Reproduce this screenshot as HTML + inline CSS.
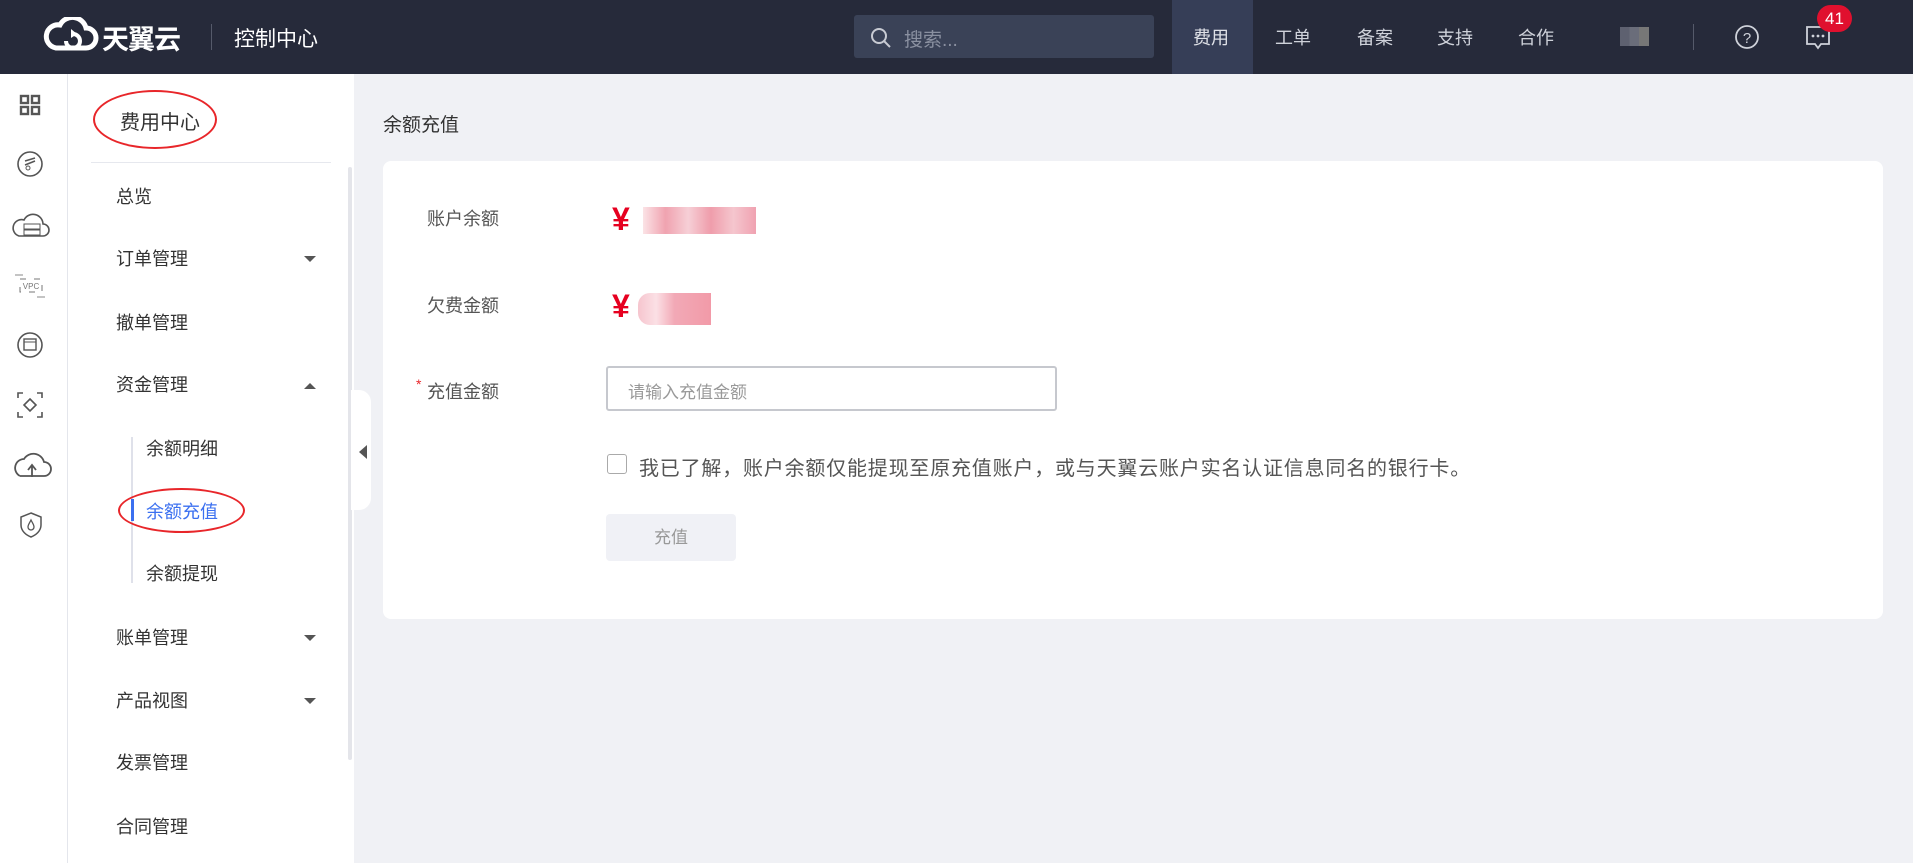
<!DOCTYPE html>
<html><head><meta charset="utf-8"><style>
*{margin:0;padding:0;box-sizing:border-box}
body{width:1913px;height:863px;overflow:hidden;background:#f0f1f5;font-family:"Liberation Sans","Noto Sans CJK SC",sans-serif;color:#333;position:relative}
.a{position:absolute}
.hdr{left:0;top:0;width:1913px;height:74px;background:#262a3a}
.nav{color:#cfd2da;font-size:18px;top:24px}
.side{left:0;top:74px;width:68px;height:789px;background:#fff;border-right:1px solid #e4e6ec}
.menu{left:68px;top:74px;width:286px;height:789px;background:#fff}
.mi{font-size:18px;color:#333;left:116px}
.sub{font-size:18px;color:#333;left:146px}
.arr{left:304px;width:0;height:0;border-left:6px solid transparent;border-right:6px solid transparent}
.lab{font-size:17px;color:#555;left:427px}
</style></head><body>
<div class="a hdr"></div>
<svg class="a" style="left:42px;top:17px" width="58" height="34" viewBox="0 0 58 34"><path d="M14 31 H44 A10 10 0 0 0 44 11 A14 14 0 0 0 18 8 A11 11 0 0 0 14 31 Z" fill="none" stroke="#fff" stroke-width="5"/><path d="M24 24 A7 7 0 1 0 31 17" fill="none" stroke="#fff" stroke-width="4"/><path d="M29 12 L35 17 L29 21 Z" fill="#fff"/></svg>
<div class="a" style="left:102px;top:18px;color:#fff;font-size:27px;font-weight:bold;letter-spacing:-1px">天翼云</div>
<div class="a" style="left:211px;top:24px;width:1px;height:26px;background:#555a6a"></div>
<div class="a" style="left:234px;top:23px;color:#fff;font-size:21px">控制中心</div>
<div class="a" style="left:854px;top:15px;width:300px;height:43px;background:#3a4257;border-radius:3px"></div>
<svg class="a" style="left:870px;top:27px" width="22" height="22" viewBox="0 0 22 22"><circle cx="9" cy="9" r="7" fill="none" stroke="#c8cbd3" stroke-width="2"/><path d="M14 14 L20 20" stroke="#c8cbd3" stroke-width="2"/></svg>
<div class="a" style="left:904px;top:25px;color:#8a90a0;font-size:19px">搜索...</div>
<div class="a" style="left:1172px;top:0;width:81px;height:74px;background:#363e57"></div>
<div class="a nav" style="left:1193px;color:#e0e2e8">费用</div>
<div class="a nav" style="left:1275px">工单</div>
<div class="a nav" style="left:1357px">备案</div>
<div class="a nav" style="left:1437px">支持</div>
<div class="a nav" style="left:1518px">合作</div>
<div class="a" style="left:1620px;top:27px;width:29px;height:19px;background:linear-gradient(90deg,#5e6170 33%,#6a6d7a 33% 66%,#777 66%)"></div>
<div class="a" style="left:1693px;top:24px;width:1px;height:26px;background:#555a6a"></div>
<svg class="a" style="left:1734px;top:24px" width="26" height="26" viewBox="0 0 26 26"><circle cx="13" cy="13" r="11" fill="none" stroke="#cfd2da" stroke-width="1.8"/><text x="13" y="19" text-anchor="middle" fill="#cfd2da" font-size="15" font-family="Liberation Sans">?</text></svg>
<svg class="a" style="left:1805px;top:25px" width="26" height="26" viewBox="0 0 26 26"><path d="M2 2 H24 V19 H16 L13 23 L10 19 H2 Z" fill="none" stroke="#cfd2da" stroke-width="1.8"/><circle cx="8" cy="11" r="1.4" fill="#cfd2da"/><circle cx="13" cy="11" r="1.4" fill="#cfd2da"/><circle cx="18" cy="11" r="1.4" fill="#cfd2da"/></svg>
<div class="a" style="left:1817px;top:5px;width:35px;height:27px;border-radius:14px;background:#e0102e;color:#fff;font-size:17px;text-align:center;line-height:27px">41</div>

<div class="a side"></div>
<svg class="a" style="left:19px;top:94px" width="22" height="22"><g fill="none" stroke="#555" stroke-width="2.4"><rect x="2" y="2" width="7" height="7"/><rect x="13" y="2" width="7" height="7"/><rect x="2" y="13" width="7" height="7"/><rect x="13" y="13" width="7" height="7"/></g></svg>
<svg class="a" style="left:16px;top:150px" width="28" height="28"><circle cx="14" cy="14" r="12" fill="none" stroke="#555" stroke-width="1.6"/><path d="M9 11 L19 8 M9 15 L19 11" stroke="#555" stroke-width="1.5"/><circle cx="12" cy="18" r="2" fill="none" stroke="#555"/></svg>
<svg class="a" style="left:11px;top:210px" width="40" height="30"><path d="M8 26 H32 A6 6 0 0 0 32 14 A10 10 0 0 0 13 10 A8 8 0 0 0 8 26 Z" fill="none" stroke="#555" stroke-width="1.6"/><rect x="13" y="14" width="16" height="5" fill="none" stroke="#555"/><rect x="13" y="20" width="16" height="5" fill="none" stroke="#555"/></svg>
<svg class="a" style="left:13px;top:272px" width="36" height="28"><rect x="7" y="7" width="22" height="13" fill="none" stroke="#777" stroke-dasharray="6 8"/><text x="18" y="17" text-anchor="middle" font-size="8" fill="#777" font-family="Liberation Sans">VPC</text><path d="M2 3h8M24 25h8" stroke="#888"/></svg>
<svg class="a" style="left:16px;top:331px" width="28" height="28"><circle cx="14" cy="14" r="12" fill="none" stroke="#555" stroke-width="1.6"/><rect x="8" y="8" width="12" height="11" fill="none" stroke="#555" stroke-width="1.4"/><path d="M8 11H20" stroke="#555"/></svg>
<svg class="a" style="left:16px;top:391px" width="28" height="28"><path d="M2 7V2H7M21 2H26V7M26 21V26H21M7 26H2V21" fill="none" stroke="#555" stroke-width="1.6"/><path d="M14 8L20 14L14 20L8 14Z" fill="none" stroke="#555" stroke-width="1.6"/></svg>
<svg class="a" style="left:10px;top:450px" width="42" height="30"><path d="M10 26 H34 A7 7 0 0 0 34 12 A11 11 0 0 0 14 9 A9 9 0 0 0 10 26" fill="none" stroke="#555" stroke-width="1.8"/><path d="M22 27V16M18 20L22 15L26 20" fill="none" stroke="#555" stroke-width="1.8"/></svg>
<svg class="a" style="left:19px;top:511px" width="24" height="28"><path d="M12 2L22 6V14C22 20 17 24 12 26C7 24 2 20 2 14V6Z" fill="none" stroke="#555" stroke-width="1.5"/><path d="M12 9C10 13 9 14 9 16A3 3 0 0 0 15 16C15 14 14 13 12 9Z" fill="none" stroke="#555" stroke-width="1.3"/></svg>

<div class="a menu"></div>
<div class="a" style="left:120px;top:106px;font-size:20px;color:#333">费用中心</div>
<div class="a" style="left:93px;top:90px;width:124px;height:59px;border:2px solid #e8262a;border-radius:50%"></div>
<div class="a" style="left:91px;top:162px;width:240px;height:1px;background:#e6e8ee"></div>
<div class="a" style="left:348px;top:167px;width:4px;height:593px;background:#e4e5ea;border-radius:2px"></div>
<div class="a mi" style="top:183px">总览</div>
<div class="a mi" style="top:245px">订单管理</div><div class="a arr" style="top:256px;border-top:6px solid #555"></div>
<div class="a mi" style="top:309px">撤单管理</div>
<div class="a mi" style="top:371px">资金管理</div><div class="a arr" style="top:383px;border-bottom:6px solid #555"></div>
<div class="a" style="left:131px;top:437px;width:2px;height:146px;background:#dfe1ea"></div>
<div class="a" style="left:131px;top:499px;width:3px;height:22px;background:#3b70f0"></div>
<div class="a sub" style="top:435px">余额明细</div>
<div class="a sub" style="top:498px;color:#3b70f0">余额充值</div>
<div class="a" style="left:118px;top:488px;width:127px;height:45px;border:2px solid #e8262a;border-radius:50%"></div>
<div class="a sub" style="top:560px">余额提现</div>
<div class="a mi" style="top:624px">账单管理</div><div class="a arr" style="top:635px;border-top:6px solid #555"></div>
<div class="a mi" style="top:687px">产品视图</div><div class="a arr" style="top:698px;border-top:6px solid #555"></div>
<div class="a mi" style="top:749px">发票管理</div>
<div class="a mi" style="top:813px">合同管理</div>
<div class="a" style="left:351px;top:390px;width:20px;height:120px;background:#fff;border-radius:0 12px 12px 0"></div>
<div class="a" style="left:359px;top:445px;border-top:7px solid transparent;border-bottom:7px solid transparent;border-right:8px solid #555"></div>

<div class="a" style="left:383px;top:110px;font-size:19px;color:#333">余额充值</div>
<div class="a" style="left:383px;top:161px;width:1500px;height:458px;background:#fff;border-radius:8px"></div>
<div class="a lab" style="top:205px;font-size:18px">账户余额</div>
<div class="a lab" style="top:292px;font-size:18px">欠费金额</div>
<div class="a lab" style="top:378px;font-size:18px"><span style="color:#e8262a;position:absolute;left:-11px;top:-2px;font-size:14px">*</span>充值金额</div>
<div class="a" style="left:612px;top:201px;color:#e60020;font-size:32px;font-weight:bold">¥</div>
<div class="a" style="left:612px;top:288px;color:#e60020;font-size:32px;font-weight:bold">¥</div>
<div class="a" style="left:643px;top:207px;width:113px;height:27px;background:linear-gradient(90deg,#fbe3e6,#f0a3b0 20%,#f6cfd6 40%,#ef9dab 60%,#f5c6ce 80%,#f0a2b1)"></div>
<div class="a" style="left:638px;top:293px;width:73px;height:32px;background:linear-gradient(90deg,#f6c5ce,#fbe0e5 25%,#f2a9b6 50%,#f29aa8 100%);border-radius:12px 0 0 12px"></div>
<div class="a" style="left:606px;top:366px;width:451px;height:45px;border:2px solid #c6c8ce;border-radius:3px"></div>
<div class="a" style="left:628px;top:378px;font-size:17px;color:#999">请输入充值金额</div>
<div class="a" style="left:607px;top:454px;width:20px;height:20px;border:1.5px solid #aaa;border-radius:3px"></div>
<div class="a" style="left:639px;top:452px;font-size:20px;letter-spacing:0.8px;color:#555;white-space:nowrap">我已了解，账户余额仅能提现至原充值账户，或与天翼云账户实名认证信息同名的银行卡。</div>
<div class="a" style="left:606px;top:514px;width:130px;height:47px;background:#f0f1f6;border-radius:4px;color:#999;font-size:17px;text-align:center;line-height:47px">充值</div>
</body></html>
